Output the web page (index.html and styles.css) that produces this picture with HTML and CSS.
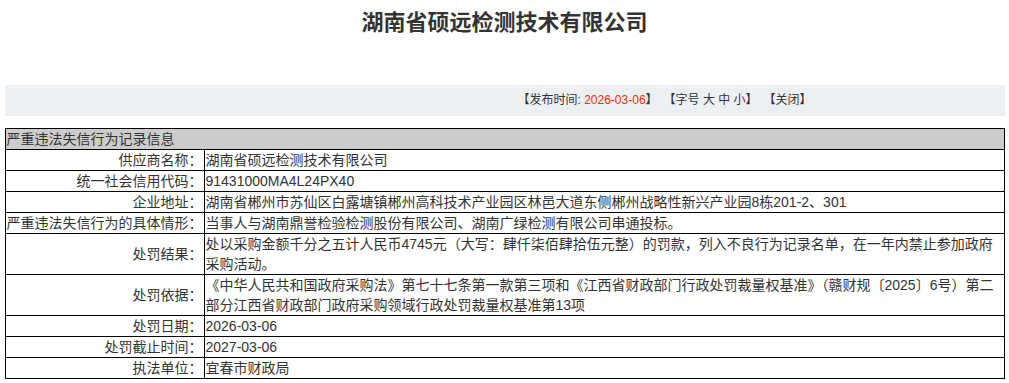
FILE: index.html
```html
<!DOCTYPE html>
<html lang="zh-CN">
<head>
<meta charset="utf-8">
<title>湖南省硕远检测技术有限公司</title>
<link rel="stylesheet" href="styles.css">
</head>
<body>
<div class="page">
  <h1 class="title">湖南省硕远检测技术有限公司</h1>
  <div class="infobar">
    <span>【发布时间: <span class="date">2026-03-06</span>】</span>
    <span>【字号 大 中 小】</span>
    <span>【关闭】</span>
  </div>
  <table class="record">
    <tr><th colspan="2" class="head">严重违法失信行为记录信息</th></tr>
    <tr><td class="label">供应商名称：</td><td class="value">湖南省硕远检测技术有限公司</td></tr>
    <tr><td class="label">统一社会信用代码：</td><td class="value">91431000MA4L24PX40</td></tr>
    <tr><td class="label">企业地址：</td><td class="value">湖南省郴州市苏仙区白露塘镇郴州高科技术产业园区林邑大道东侧郴州战略性新兴产业园8栋201-2、301</td></tr>
    <tr><td class="label">严重违法失信行为的具体情形：</td><td class="value">当事人与湖南鼎誉检验检测股份有限公司、湖南广绿检测有限公司串通投标。</td></tr>
    <tr><td class="label">处罚结果：</td><td class="value">处以采购金额千分之五计人民币4745元（大写：肆仟柒佰肆拾伍元整）的罚款，列入不良行为记录名单，在一年内禁止参加政府采购活动。</td></tr>
    <tr><td class="label">处罚依据：</td><td class="value">《中华人民共和国政府采购法》第七十七条第一款第三项和《江西省财政部门行政处罚裁量权基准》（赣财规〔2025〕6号）第二部分江西省财政部门政府采购领域行政处罚裁量权基准第13项</td></tr>
    <tr><td class="label">处罚日期：</td><td class="value">2026-03-06</td></tr>
    <tr><td class="label">处罚截止时间：</td><td class="value">2027-03-06</td></tr>
    <tr><td class="label">执法单位：</td><td class="value">宜春市财政局</td></tr>
  </table>
</div>
</body>
</html>
```

FILE: styles.css
```css
html, body {
  margin: 0;
  padding: 0;
  background: #fff;
}
body {
  font-family: "Liberation Sans", Arial, "Noto Sans CJK SC", sans-serif;
  color: #333;
}
.page {
  width: 1000px;
  margin: 0 auto;
}
.title {
  margin: 0;
  padding-top: 9px;
  height: 76px;
  font-size: 22px;
  line-height: 28px;
  font-weight: bold;
  text-align: center;
  color: #333;
}
.infobar {
  background: #edf0f3;
  height: 31px;
  line-height: 31px;
  font-size: 12px;
  color: #333;
  padding-left: 513px;
  box-sizing: border-box;
  display: flex;
  gap: 6px;
  margin-bottom: 12px;
}
.date {
  color: #ff2a00;
}
.record {
  width: 1000px;
  border-collapse: collapse;
  font-size: 14px;
  line-height: 20px;
}
.record th,
.record td {
  border: 1px solid #000;
  padding: 0 1px;
}
.head {
  background: #cccccc;
  text-align: left;
  font-weight: normal;
  color: #333;
}
.label {
  width: 195px;
  text-align: right;
  padding-right: 3px;
  white-space: nowrap;
}
.value {
  text-align: left;
}
```
